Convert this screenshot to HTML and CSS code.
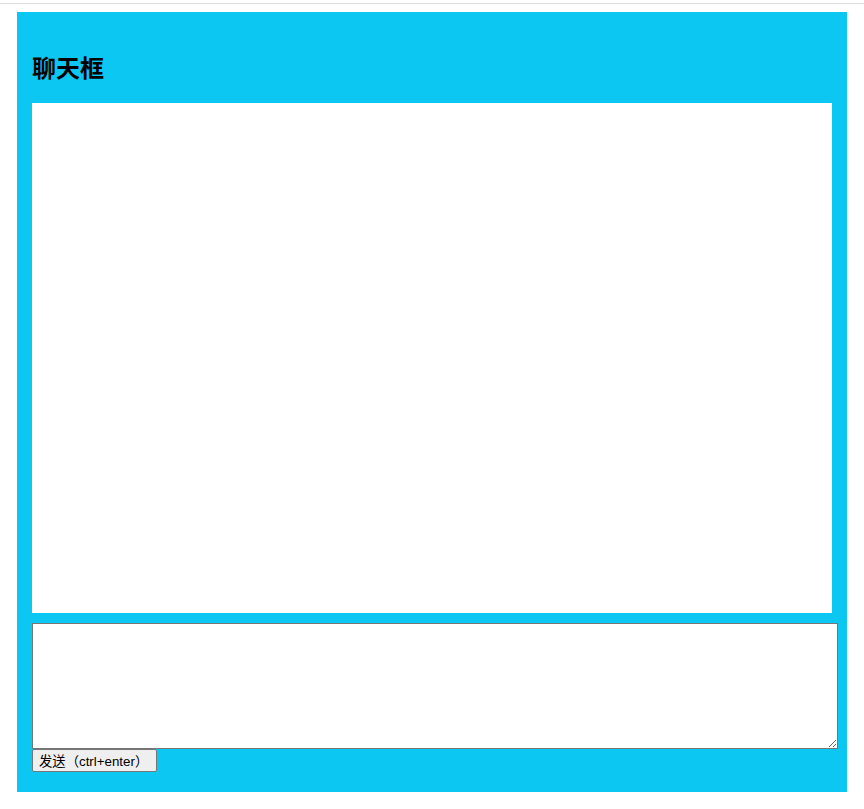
FILE: index.html
```html
<!DOCTYPE html>
<html lang="zh-CN">
<head>
<meta charset="utf-8">
<title>聊天框</title>
<link rel="stylesheet" href="styles.css">
</head>
<body>
<div class="topline"></div>
<div class="chat">
  <h2 class="chat-title">聊天框</h2>
  <div class="messages"></div>
  <textarea class="input"></textarea>
  <div class="actions"><button class="send" type="button">发送（ctrl+enter）</button></div>
</div>
</body>
</html>
```

FILE: styles.css
```css
html, body {
  margin: 0;
  padding: 0;
  background: #ffffff;
  font-family: "Liberation Sans", "Noto Sans CJK SC", sans-serif;
}
.topline {
  margin-top: 3px;
  height: 1px;
  background: #dddddd;
}
.chat {
  box-sizing: border-box;
  width: 830px;
  height: 780px;
  margin: 8px 0 0 17px;
  padding: 15px;
  background: #0cc7f2;
}
.chat-title {
  margin: 0;
  padding-top: 28px;
  height: 56px;
  box-sizing: border-box;
  font-family: "Noto Sans CJK SC", sans-serif;
  font-size: 24px;
  font-weight: bold;
  line-height: 24px;
  color: #000;
  margin-bottom: 20px;
}
.messages {
  width: 800px;
  height: 510px;
  background: #ffffff;
}
.input {
  display: block;
  box-sizing: border-box;
  width: 806px;
  height: 126px;
  margin: 10px 0 0 0;
  padding: 2px;
  border: 1px solid #767676;
  background: #fff;
}
.actions {
  display: flex;
}
.send {
  box-sizing: border-box;
  width: 125px;
  height: 23px;
  padding: 1px 6px;
  border: 1px solid #767676;
  border-radius: 2px;
  background: #efefef;
  font-family: "Liberation Sans", "Noto Sans CJK SC", sans-serif;
  font-size: 13.33px;
  color: #000;
  text-align: left;
}
```
